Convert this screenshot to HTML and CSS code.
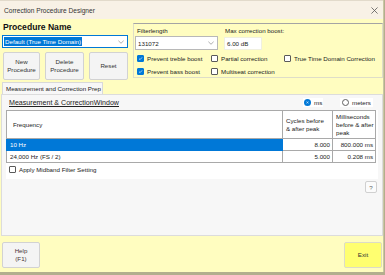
FILE: index.html
```html
<!DOCTYPE html>
<html>
<head>
<meta charset="utf-8">
<link rel="stylesheet" href="styles.css">
</head>
<body>
<div class="screen">
  <div class="window">
    <div class="titlebar">
      <span>Correction Procedure Designer</span>
      <svg class="close" viewBox="0 0 8 8"><path d="M0.5 0.5L7.5 7.5M7.5 0.5L0.5 7.5" stroke="#555" stroke-width="0.9"/></svg>
    </div>
    <div class="top">
      <div class="left">
        <div class="pname">Procedure Name</div>
        <div class="combo focus"><span class="sel">Default (True Time Domain)</span><svg class="chev" viewBox="0 0 8 5"><path d="M0.5 0.8L4 4.2L7.5 0.8" fill="none" stroke="#777" stroke-width="0.8"/></svg></div>
        <div class="btnrow">
          <div class="btn b-new">New<br>Procedure</div>
          <div class="btn b-del">Delete<br>Procedure</div>
          <div class="btn b-reset">Reset</div>
        </div>
      </div>
      <div class="group">
        <div class="fields">
          <div class="field f-len">
            <div class="flabel">Filterlength</div>
            <div class="combo"><span>131072</span><svg class="chev" viewBox="0 0 8 5"><path d="M0.5 0.8L4 4.2L7.5 0.8" fill="none" stroke="#777" stroke-width="0.8"/></svg></div>
          </div>
          <div class="field f-max">
            <div class="flabel">Max correction boost:</div>
            <div class="input">6.00 dB</div>
          </div>
        </div>
        <div class="checks">
          <div class="chk"><span class="box on"><svg viewBox="0 0 8 8"><path d="M1.6 4.2L3.3 5.8L6.5 2.2" fill="none" stroke="#fff" stroke-width="1"/></svg></span>Prevent treble boost</div>
          <div class="chk"><span class="box"></span>Partial correction</div>
          <div class="chk"><span class="box"></span>True Time Domain Correction</div>
          <div class="chk"><span class="box on"><svg viewBox="0 0 8 8"><path d="M1.6 4.2L3.3 5.8L6.5 2.2" fill="none" stroke="#fff" stroke-width="1"/></svg></span>Prevent bass boost</div>
          <div class="chk"><span class="box"></span>Multiseat correction</div>
        </div>
      </div>
    </div>
    <div class="tabs"><div class="tab">Measurement and Correction Prep</div></div>
    <div class="panel">
      <div class="phead">
        <span class="ulabel">Measurement &amp; CorrectionWindow</span>
        <div class="radios">
          <div class="radio r-ms"><span class="dot on"></span>ms</div>
          <div class="radio r-m"><span class="dot"></span>meters</div>
        </div>
      </div>
      <div class="gridbox">
        <table class="grid">
          <colgroup><col class="c1"><col class="c2"><col class="c3"></colgroup>
          <tr class="hrow"><th class="h1">Frequency</th><th>Cycles before<br>&amp; after peak</th><th>Milliseconds<br>before &amp; after<br>peak</th></tr>
          <tr class="drow sel-row"><td class="freq">10 Hz</td><td class="num">8.000</td><td class="num">800.000 ms</td></tr>
          <tr class="drow"><td class="freq">24,000 Hz (FS / 2)</td><td class="num">5.000</td><td class="num">0.208 ms</td></tr>
        </table>
        <div class="chk midband"><span class="box"></span>Apply Midband Filter Setting</div>
      </div>
      <div class="qrow"><div class="qbtn">?</div></div>
    </div>
    <div class="bottom">
      <div class="btn b-help">Help<br>(F1)</div>
      <div class="btn b-exit">Exit</div>
    </div>
  </div>
  <div class="strip"></div>
</div>
</body>
</html>
```

FILE: styles.css
```css
* { box-sizing: border-box; margin: 0; padding: 0; }
html, body { width: 385px; height: 275px; overflow: hidden; }
body {
  font-family: "Liberation Sans", Arial, sans-serif;
  font-size: 6.2px;
  color: #222;
  background: #b3ae8e;
}
.screen { display: flex; flex-direction: column; width: 385px; height: 275px; }
.window {
  width: 384px; height: 272px;
  background: #fffdc0;
  border-right: 1px solid #c9c6a4;
  display: flex; flex-direction: column;
}
.titlebar {
  height: 19px; flex: none;
  background: #f8f1e6;
  border-top: 1px solid #e2dacb;
  display: flex; align-items: center; justify-content: space-between;
  padding: 0 4px 0 4px;
  color: #333; font-size: 6.6px;
}
.close { width: 7px; height: 7px; margin-right: 1px; }

.top { display: flex; gap: 5px; height: 63px; flex: none; }
.left { width: 128px; padding-left: 2px; display: flex; flex-direction: column; }
.pname { font-weight: bold; font-size: 8.6px; line-height: 12px; margin-top: 2px; padding-left: 1px; color: #111; }
.combo {
  height: 13px; background: #fff;
  border: 1px solid #b8b8b8;
  display: flex; align-items: center; justify-content: space-between;
  padding: 0 3px 0 2px;
}
.combo.focus { border-color: #0078d7; margin-top: 2px; padding-left: 1px; }
.sel { background: #0078d7; color: #fff; line-height: 9px; padding: 0 1px; }
.chev { width: 6px; height: 4px; }
.btnrow { display: flex; gap: 5px; margin-top: 4px; padding-left: 1px; }
.btn {
  height: 28px; background: #f4f4f4;
  border: 1px solid #d2d2d2; border-radius: 2px;
  display: flex; align-items: center; justify-content: center;
  text-align: center; line-height: 8px; color: #333;
}
.b-new { width: 37px; }
.b-del { width: 39px; }
.b-reset { width: 39px; }

.group {
  flex: 1; margin-top: 4px; height: 55px;
  border: 1px solid #deddc8; border-top-color: #a4a4a4;
  padding: 3px 0 0 1px;
  display: flex; flex-direction: column;
}
.fields { display: flex; gap: 6px; }
.flabel { line-height: 8px; padding-left: 2px; color: #222; }
.f-len { width: 83px; }
.f-len .combo { margin-top: 1px; height: 14px; }
.f-max .flabel { padding-left: 1px; }
.input {
  width: 38px; height: 13px; margin-top: 2px;
  background: #fff; border: 1px solid #f0f0e0;
  display: flex; align-items: center; padding-left: 2px;
}
.checks {
  margin-top: 2px; padding-left: 2px;
  display: grid; grid-template-columns: 74px 73px auto;
  grid-template-rows: 13px 12px;
}
.chk { display: flex; align-items: center; gap: 3px; white-space: nowrap; }
.box {
  width: 7px; height: 7px; flex: none;
  border: 1px solid #5a5a5a; border-radius: 1px; background: #fff;
  display: flex;
}
.box.on { background: #0078d7; border-color: #0078d7; }
.box svg { width: 100%; height: 100%; }

.tabs { display: flex; margin-top: 0; padding-left: 2px; height: 12px; flex: none; }
.tab {
  width: 101px; height: 12px;
  background: #f7f7f7;
  border: 1px solid #d9d9d9; border-bottom: none;
  display: flex; align-items: center; padding-left: 3px;
  white-space: nowrap;
}
.panel {
  margin-left: 1px; width: 382px; height: 142px; flex: none;
  background: #f7f7f7; border: 1px solid #dcdcdc;
  display: flex; flex-direction: column;
}
.phead {
  height: 15px; display: flex; align-items: center; justify-content: space-between;
  padding: 0 9px 0 7px;
}
.ulabel { text-decoration: underline; font-size: 7.1px; }
.radios { display: flex; gap: 17px; }
.radio {
  display: flex; align-items: center; gap: 3px;
  background: #fff; height: 9px; padding: 0 2px 0 1px;
}
.r-ms { width: 20px; }
.r-m { width: 33px; padding-left: 2px; }
.dot {
  width: 7px; height: 7px; border-radius: 50%;
  border: 1px solid #606060; background: #fff; flex: none;
}
.dot.on { border: 2px solid #0078d7; background: #fff; box-shadow: inset 0 0 0 1px #0078d7; }

.gridbox {
  margin: 0 4px 0 4px; height: 69px; background: #fff;
  display: flex; flex-direction: column;
}
.grid { width: 369px; border-collapse: collapse; table-layout: fixed; }
.c1 { width: 276px; }
.c2 { width: 50px; }
.c3 { width: 43px; }
.grid th, .grid td { border: 1px solid #a9a9a9; font-weight: normal; }
.hrow th { height: 28px; text-align: left; vertical-align: middle; line-height: 8px; padding: 0 1px 0 5px; white-space: nowrap; overflow: hidden; }
.hrow th.h1 { padding-left: 6px; }
.hrow th + th { padding-left: 3px; }
.drow td { height: 12px; padding: 0 2px 0 3px; white-space: nowrap; }
.drow td.num { text-align: right; }
.sel-row td.freq { background: #0078d7; color: #fff; border-color: #0078d7; }
.midband { margin-top: 2px; padding-left: 3px; height: 9px; }

.qrow { display: flex; justify-content: flex-end; padding-right: 5px; margin-top: 2px; }
.qbtn {
  width: 12px; height: 12px; background: #fbfbfb;
  border: 1px solid #d0d0d0; border-radius: 2px;
  display: flex; align-items: center; justify-content: center; color: #666;
}

.bottom { display: flex; justify-content: space-between; margin-top: 6px; padding: 0 1px 0 2px; }
.b-help { width: 38px; height: 26px; color: #4a3434; }
.b-exit { width: 38px; height: 26px; background: #ffff70; border-color: #dcdcc8; }
.strip { height: 3px; background: #b3ae8e; }
```
